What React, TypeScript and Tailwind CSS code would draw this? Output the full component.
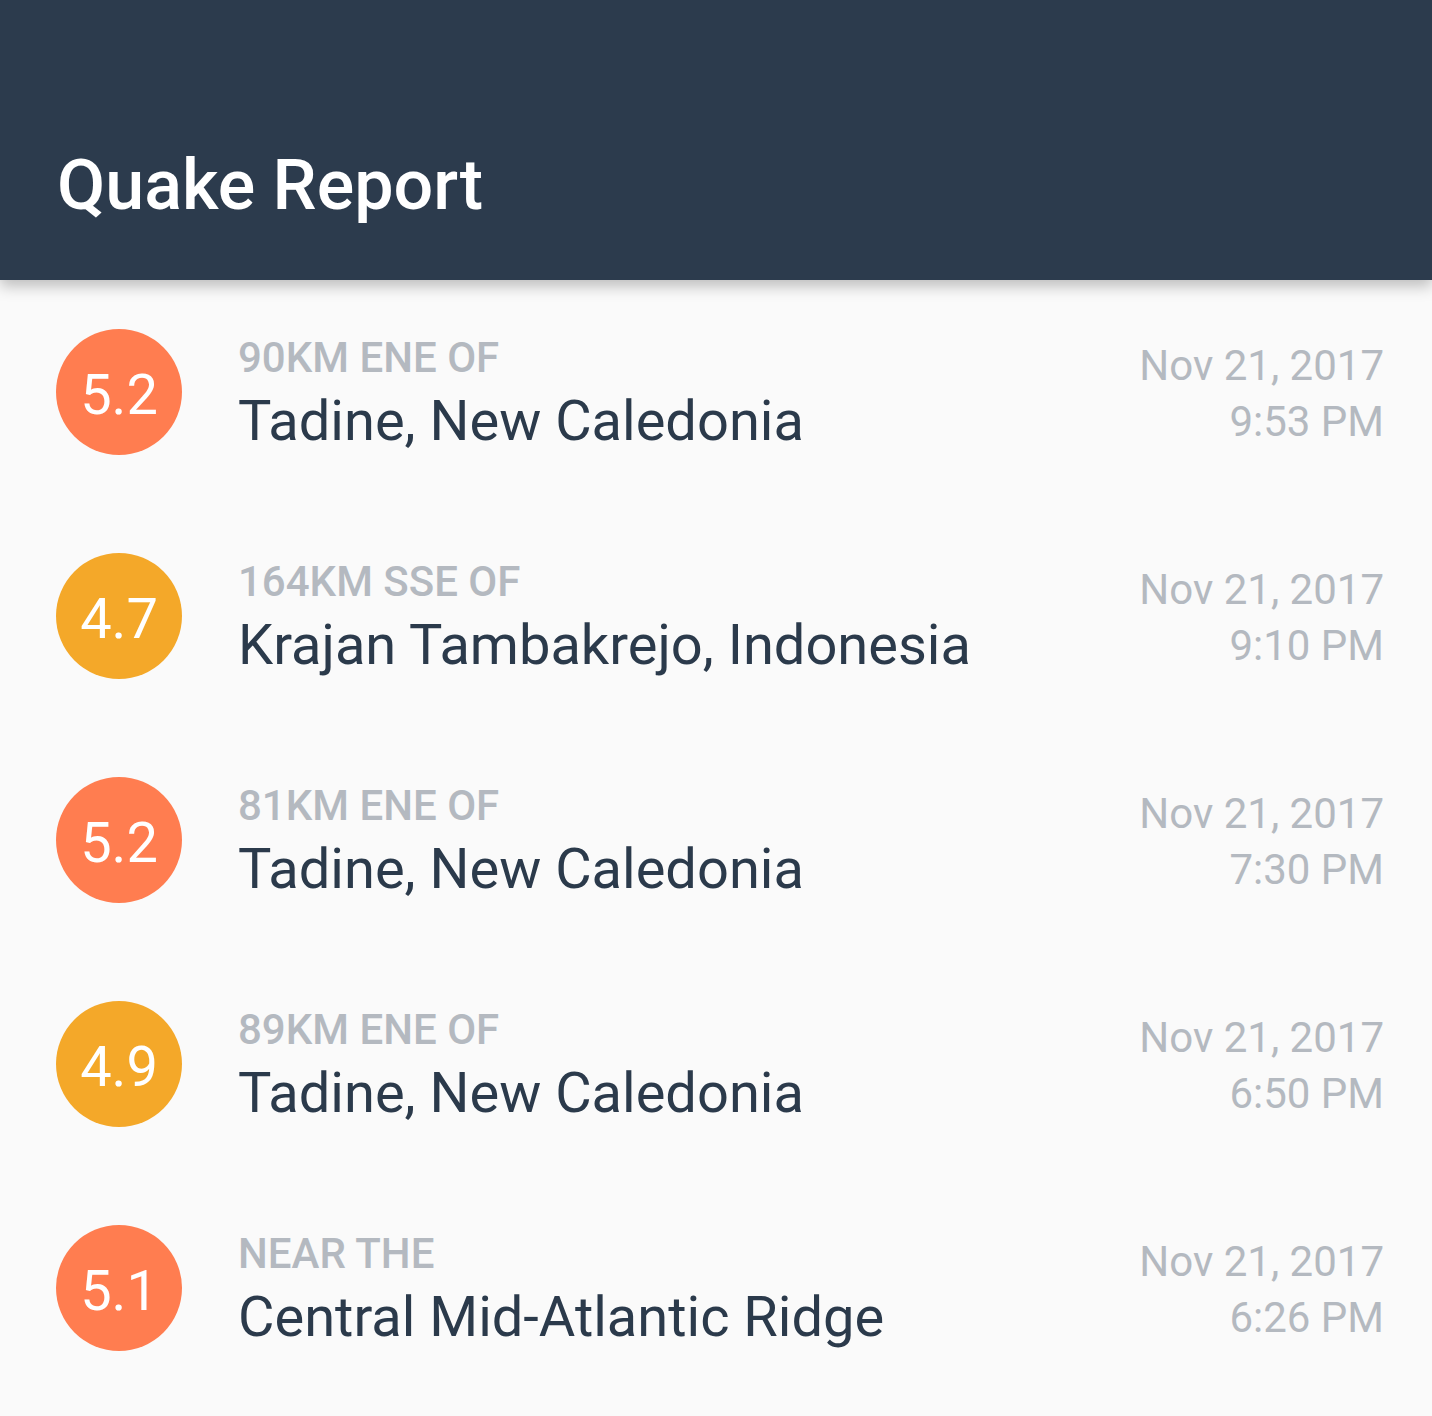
import React from 'react';

interface Quake {
  mag: string;
  offset: string;
  place: string;
  date: string;
  time: string;
}

const quakes: Quake[] = [
  { mag: '5.2', offset: '90KM ENE OF', place: 'Tadine, New Caledonia', date: 'Nov 21, 2017', time: '9:53 PM' },
  { mag: '4.7', offset: '164KM SSE OF', place: 'Krajan Tambakrejo, Indonesia', date: 'Nov 21, 2017', time: '9:10 PM' },
  { mag: '5.2', offset: '81KM ENE OF', place: 'Tadine, New Caledonia', date: 'Nov 21, 2017', time: '7:30 PM' },
  { mag: '4.9', offset: '89KM ENE OF', place: 'Tadine, New Caledonia', date: 'Nov 21, 2017', time: '6:50 PM' },
  { mag: '5.1', offset: 'NEAR THE', place: 'Central Mid-Atlantic Ridge', date: 'Nov 21, 2017', time: '6:26 PM' },
];

const QuakeRow: React.FC<{ quake: Quake }> = ({ quake }) => {
  // 5+ is coral, below is amber
  const circle = parseFloat(quake.mag) >= 5 ? 'bg-[#ff7d50]' : 'bg-[#f4a829]';
  return (
    <div className="flex h-[224px] items-center pl-[56px] pr-[48px]">
      <div className={`flex h-[126px] w-[126px] shrink-0 items-center justify-center rounded-full pt-[6px] ${circle}`}>
        <span className="text-[56px] leading-none text-white">{quake.mag}</span>
      </div>
      <div className="ml-[56px] flex flex-1 flex-col pt-[4px]">
        <span className="text-[42px] font-medium leading-[48px] text-[#b4b9c0]">{quake.offset}</span>
        <span className="mt-[6px] text-[56px] leading-[66px] text-[#2b3a4b]">{quake.place}</span>
      </div>
      <div className="flex flex-col items-end pt-[4px]">
        <span className="text-[42px] leading-[56px] text-[#b4b9c0]">{quake.date}</span>
        <span className="text-[42px] leading-[56px] text-[#b4b9c0]">{quake.time}</span>
      </div>
    </div>
  );
};

export default function App() {
  return (
    <div className="min-h-[1416px] bg-[#fafafa] font-['Roboto',sans-serif]">
      <header className="relative z-10 flex h-[280px] items-end bg-[#2c3b4d] pb-[60px] pl-[57px] shadow-[0_6px_14px_rgba(0,0,0,0.25)]">
        <h1 className="text-[70px] font-medium leading-none text-white">Quake Report</h1>
      </header>
      <main>
        {quakes.map((q, i) => (
          <QuakeRow key={i} quake={q} />
        ))}
      </main>
    </div>
  );
}
